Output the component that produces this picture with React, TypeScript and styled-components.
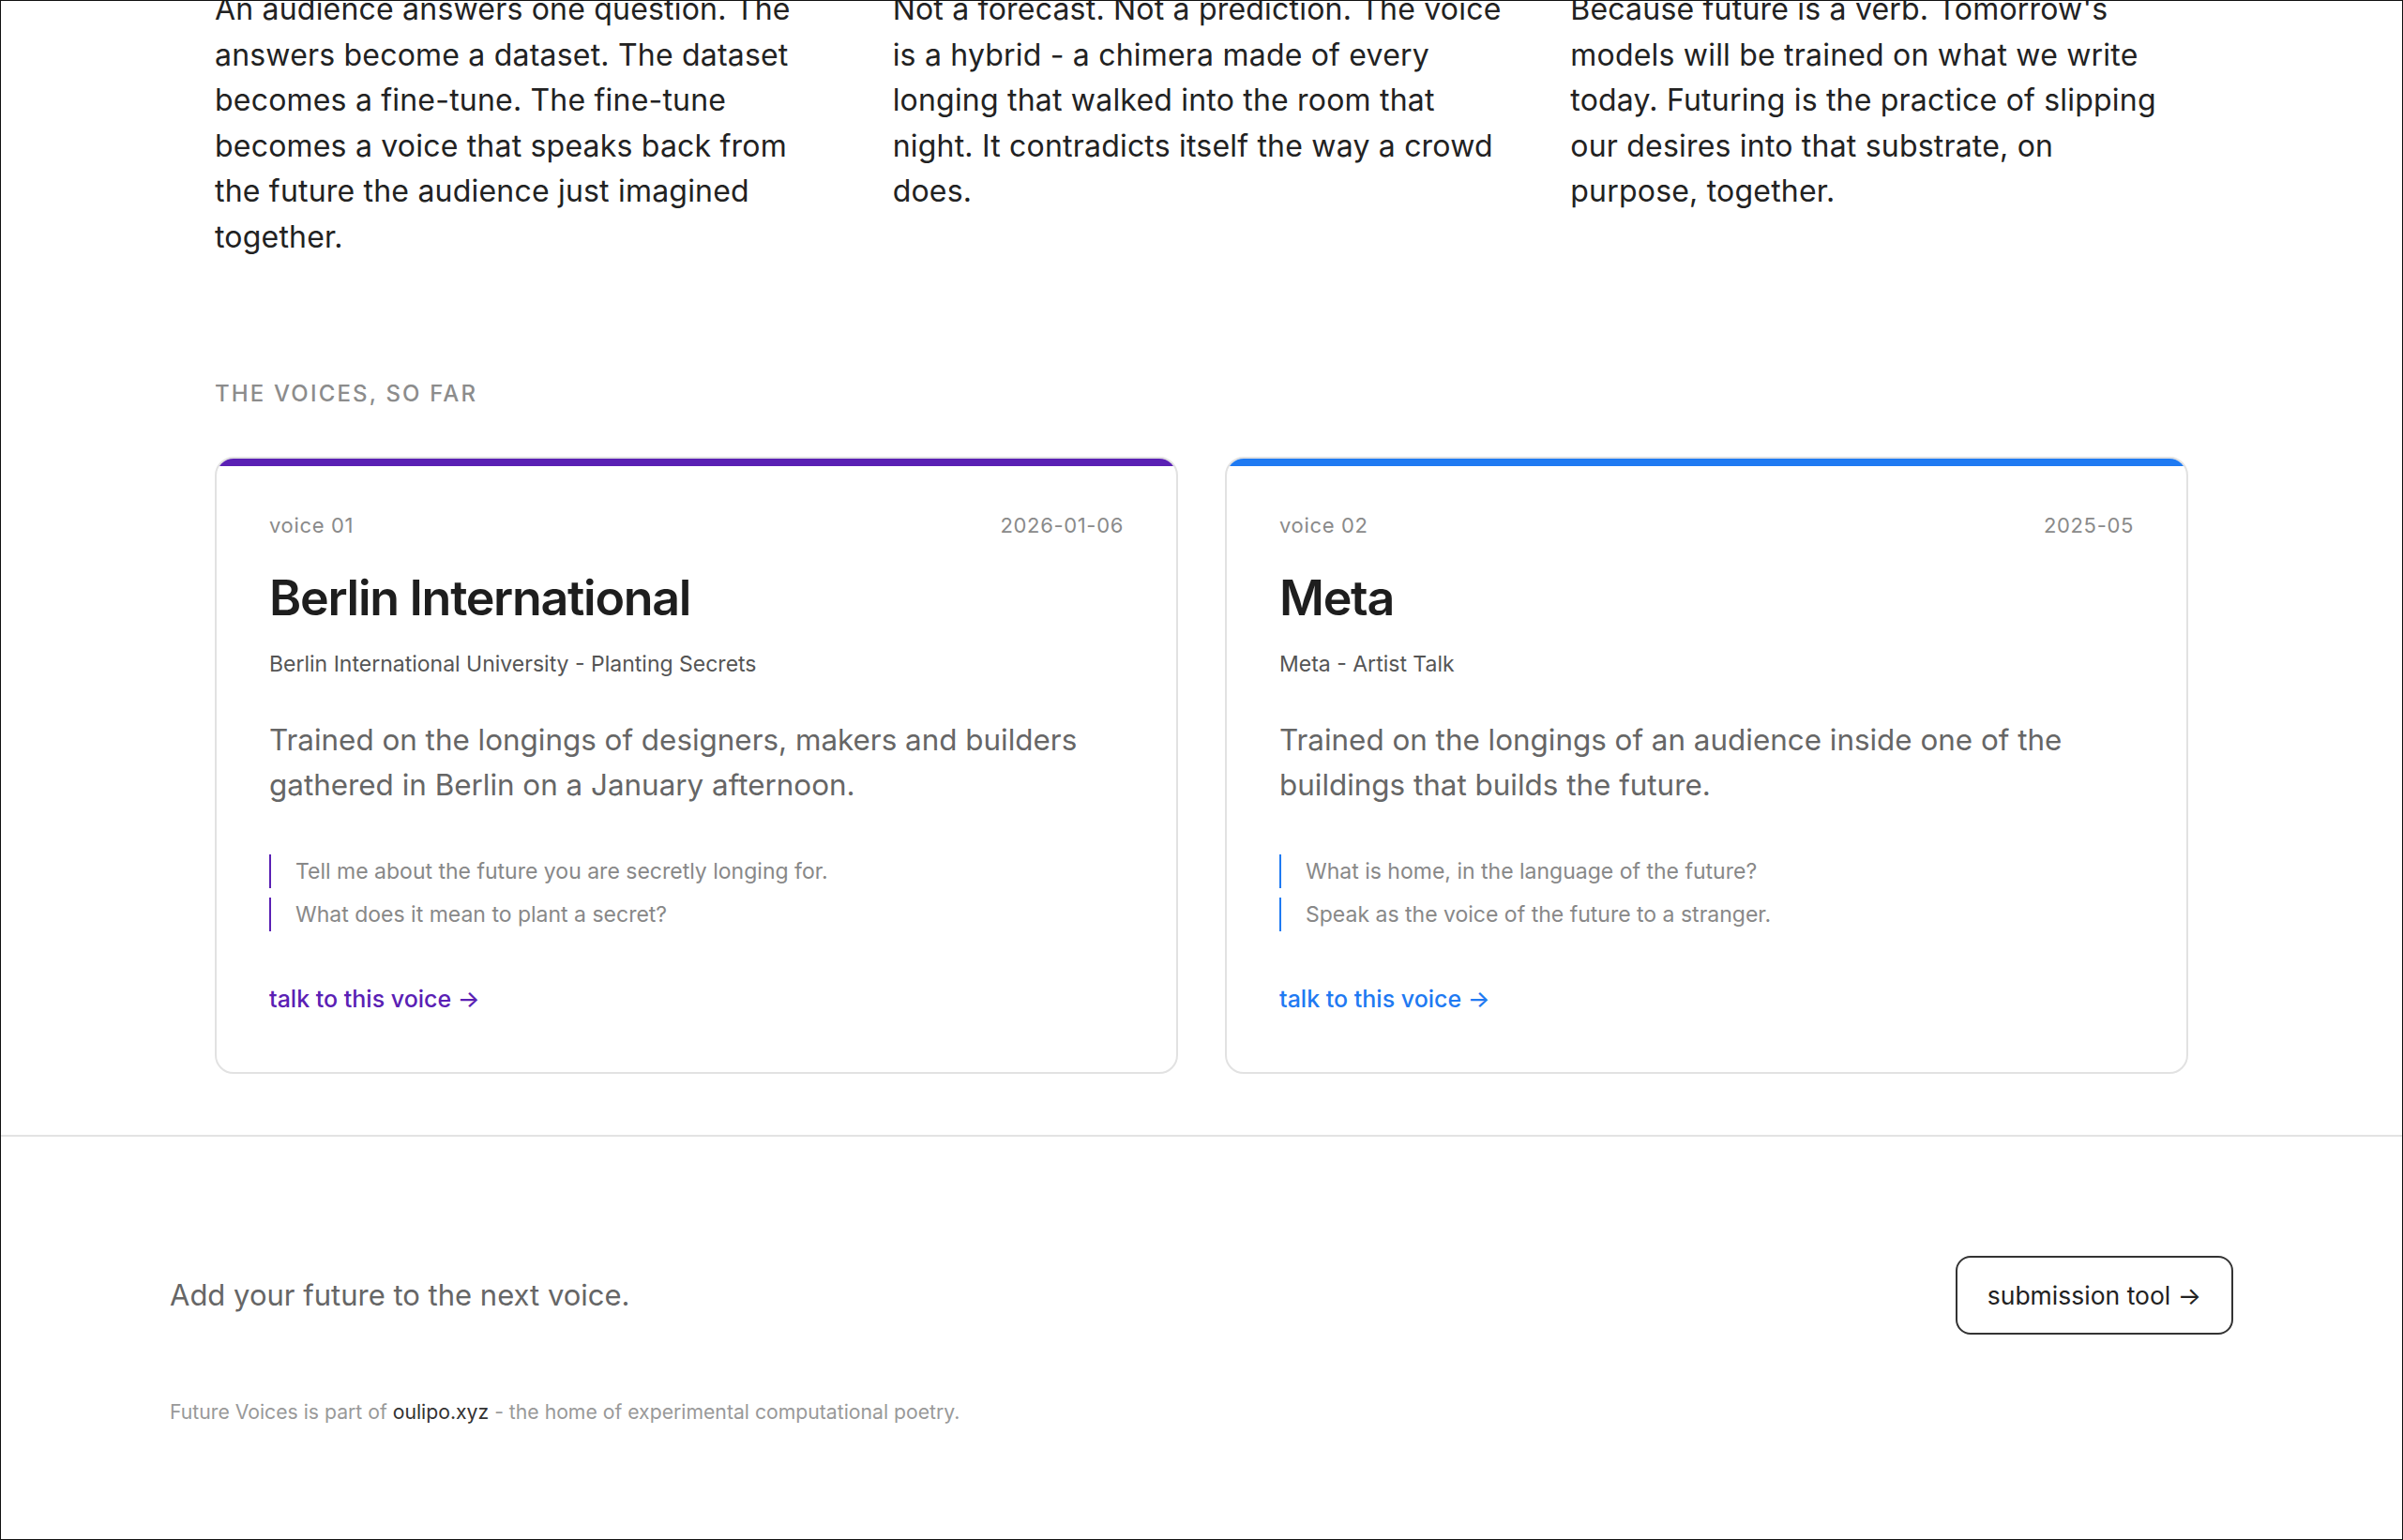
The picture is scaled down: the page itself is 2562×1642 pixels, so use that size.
import React from 'react';
import styled, { createGlobalStyle } from 'styled-components';

interface Voice {
    index: string;
    date: string;
    title: string;
    subtitle: string;
    description: string;
    questions: string[];
    accent: string;
}

const voices: Voice[] = [
    {
        index: 'voice 01',
        date: '2026-01-06',
        title: 'Berlin International',
        subtitle: 'Berlin International University - Planting Secrets',
        description:
            'Trained on the longings of designers, makers and builders gathered in Berlin on a January afternoon.',
        questions: [
            'Tell me about the future you are secretly longing for.',
            'What does it mean to plant a secret?',
        ],
        accent: '#5a20b4',
    },
    {
        index: 'voice 02',
        date: '2025-05',
        title: 'Meta',
        subtitle: 'Meta - Artist Talk',
        description:
            'Trained on the longings of an audience inside one of the buildings that builds the future.',
        questions: [
            'What is home, in the language of the future?',
            'Speak as the voice of the future to a stranger.',
        ],
        accent: '#1f7af2',
    },
];

const intro = [
    'An audience answers one question. The answers become a dataset. The dataset becomes a fine-tune. The fine-tune becomes a voice that speaks back from the future the audience just imagined together.',
    'Not a forecast. Not a prediction. The voice is a hybrid - a chimera made of every longing that walked into the room that night. It contradicts itself the way a crowd does.',
    "Because future is a verb. Tomorrow's models will be trained on what we write today. Futuring is the practice of slipping our desires into that substrate, on purpose, together.",
];

const GlobalStyle = createGlobalStyle`
    html, body {
        margin: 0;
        padding: 0;
        background: #fff;
    }
    body {
        font-family: Inter, "Liberation Sans", sans-serif;
        color: #222;
        -webkit-font-smoothing: antialiased;
    }
    * {
        box-sizing: border-box;
    }
`;

const Frame = styled.div`
    height: 100vh;
    border: 1px solid #111;
    overflow: hidden;
    display: flex;
    flex-direction: column;
`;

const Main = styled.main`
    width: 2104px;
    margin: 0 auto;
`;

// the page is scrolled: the top of the intro sits above the window
const Intro = styled.section`
    display: grid;
    grid-template-columns: repeat(3, 1fr);
    column-gap: 64px;
    margin-top: -15px;
`;

const IntroText = styled.p`
    margin: 0;
    font-size: 32px;
    line-height: 48.6px;
    letter-spacing: 0.2px;
    color: #222;
`;

const SectionLabel = styled.h2`
    margin: 124px 0 0;
    font-size: 24px;
    line-height: 36px;
    font-weight: 500;
    letter-spacing: 0.09em;
    text-transform: uppercase;
    color: #8c8c8c;
`;

const Cards = styled.div`
    display: grid;
    grid-template-columns: repeat(2, 1fr);
    column-gap: 50px;
    margin-top: 49px;
`;

const Card = styled.article`
    border: 2px solid #e2e2e2;
    border-radius: 20px;
    overflow: hidden;
    background: #fff;
`;

const AccentBar = styled.div<{ $color: string }>`
    height: 8px;
    background: ${(p) => p.$color};
`;

const CardBody = styled.div`
    padding: 47px 56px 58px;
`;

const MetaRow = styled.div`
    display: flex;
    justify-content: space-between;
    font-size: 22px;
    line-height: 33px;
    letter-spacing: 0.03em;
    color: #8a8a8a;
`;

const Title = styled.h3`
    margin: 30px 0 0;
    font-size: 52px;
    line-height: 62px;
    font-weight: 600;
    letter-spacing: -0.025em;
    color: #1e1e1e;
`;

const Subtitle = styled.div`
    margin-top: 21px;
    font-size: 23px;
    line-height: 36px;
    color: #555;
`;

const Description = styled.p`
    margin: 39px 0 0;
    font-size: 31.4px;
    line-height: 48px;
    color: #666;
`;

const Questions = styled.ul`
    list-style: none;
    margin: 50px 0 0;
    padding: 0;
    display: flex;
    flex-direction: column;
    gap: 10px;
`;

const Question = styled.li<{ $color: string }>`
    border-left: 2px solid ${(p) => p.$color};
    padding-left: 26px;
    font-size: 23px;
    line-height: 36px;
    color: #888;
`;

const TalkLink = styled.a<{ $color: string }>`
    display: inline-block;
    margin-top: 53px;
    font-size: 25px;
    line-height: 39px;
    font-weight: 500;
    color: ${(p) => p.$color};
    text-decoration: none;
`;

const Footer = styled.footer`
    margin-top: 65px;
    border-top: 2px solid #e3e3e3;
`;

const FooterInner = styled.div`
    width: 2200px;
    margin: 0 auto;
    padding-top: 127px;
`;

const FooterRow = styled.div`
    display: flex;
    justify-content: space-between;
    align-items: center;
`;

const Invite = styled.p`
    margin: 0;
    font-size: 31px;
    line-height: 48px;
    color: #666;
`;

const SubmitButton = styled.a`
    display: inline-flex;
    align-items: center;
    height: 84px;
    padding: 0 32px;
    border: 2px solid #333;
    border-radius: 16px;
    font-size: 26.5px;
    color: #222;
    text-decoration: none;
`;

const Footnote = styled.p`
    margin: 66px 0 0;
    font-size: 21.2px;
    line-height: 33px;
    color: #999;
`;

const FootLink = styled.a`
    color: #333;
    text-decoration: none;
`;

const VoiceCard = ({ voice }: { voice: Voice }) => (
    <Card>
        <AccentBar $color={voice.accent} />
        <CardBody>
            <MetaRow>
                <span>{voice.index}</span>
                <span>{voice.date}</span>
            </MetaRow>
            <Title>{voice.title}</Title>
            <Subtitle>{voice.subtitle}</Subtitle>
            <Description>{voice.description}</Description>
            <Questions>
                {voice.questions.map((q) => (
                    <Question key={q} $color={voice.accent}>
                        {q}
                    </Question>
                ))}
            </Questions>
            <TalkLink href="#" $color={voice.accent}>
                talk to this voice →
            </TalkLink>
        </CardBody>
    </Card>
);

export default function App() {
    return (
        <>
            <GlobalStyle />
            <Frame>
                <Main>
                    <Intro>
                        {intro.map((text) => (
                            <IntroText key={text.slice(0, 12)}>{text}</IntroText>
                        ))}
                    </Intro>
                    <SectionLabel>The voices, so far</SectionLabel>
                    <Cards>
                        {voices.map((v) => (
                            <VoiceCard key={v.index} voice={v} />
                        ))}
                    </Cards>
                </Main>
                <Footer>
                    <FooterInner>
                        <FooterRow>
                            <Invite>Add your future to the next voice.</Invite>
                            <SubmitButton href="#">submission tool →</SubmitButton>
                        </FooterRow>
                        <Footnote>
                            Future Voices is part of <FootLink href="#">oulipo.xyz</FootLink> - the home of
                            experimental computational poetry.
                        </Footnote>
                    </FooterInner>
                </Footer>
            </Frame>
        </>
    );
}
